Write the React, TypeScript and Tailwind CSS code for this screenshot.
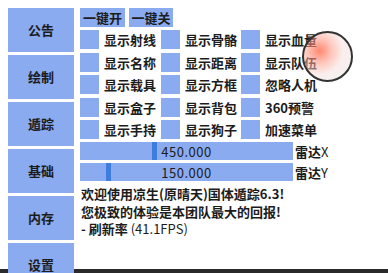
import React from 'react';

const tabs = ['公告', '绘制', '遁踪', '基础', '内存', '设置'];

const toggles = [
  ['显示射线', '显示骨骼', '显示血量'],
  ['显示名称', '显示距离', '显示队伍'],
  ['显示载具', '显示方框', '忽略人机'],
  ['显示盒子', '显示背包', '360预警'],
  ['显示手持', '显示狗子', '加速菜单'],
];

const sliders = [
  { value: '450.000', label: '雷达', axis: 'X', pos: 72 },
  { value: '150.000', label: '雷达', axis: 'Y', pos: 26 },
];

function Toggle({ label }: { label: string }) {
  return (
    <div className="flex items-center gap-[5px] h-[19px]">
      <div className="w-[19px] h-[19px] bg-[#8aabef] shrink-0" />
      <span className="text-[13px] font-bold text-[#1c1c1c] leading-none whitespace-nowrap">{label}</span>
    </div>
  );
}

export default function App() {
  return (
    <div
      className="relative w-[388px] h-[273px] bg-white overflow-hidden"
      style={{ fontFamily: '"Noto Sans CJK SC", "Noto Sans", sans-serif' }}
    >
      <div className="flex h-[269px]">
        {/* Tab column */}
        <div className="flex flex-col gap-[3px] pl-[8px] pt-[8px] w-[74px] shrink-0">
          {tabs.map(t => (
            <div
              key={t}
              className="h-[44px] w-[66px] shrink-0 bg-[#8aabef] flex items-center justify-center text-[13px] font-bold text-[#1c1c1c]"
            >
              {t}
            </div>
          ))}
        </div>

        {/* Content */}
        <div className="flex flex-col pl-[6px] pt-[8px]">
          <div className="flex gap-[4px]">
            <div className="h-[19px] w-[45px] bg-[#8aabef] flex items-center justify-center text-[13px] font-bold text-[#1c1c1c] leading-none">
              一键开
            </div>
            <div className="h-[19px] w-[44px] bg-[#8aabef] flex items-center justify-center text-[13px] font-bold text-[#1c1c1c] leading-none">
              一键关
            </div>
          </div>

          <div className="mt-[3px] grid grid-cols-[81px_80px_auto] gap-y-[3.5px]">
            {toggles.flat().map(l => (
              <Toggle key={l} label={l} />
            ))}
          </div>

          <div className="mt-[3px] flex flex-col gap-[3px]">
            {sliders.map(s => (
              <div key={s.axis} className="flex items-center gap-[2px]">
                <div className="relative w-[213px] h-[18px] bg-[#8aabef] flex items-center justify-center">
                  <div
                    className="absolute top-0 h-full w-[5px] bg-[#3d7ddf]"
                    style={{ left: `${s.pos}px` }}
                  />
                  <span className="relative text-[13px] text-[#1c1c1c] leading-none tracking-[0.5px]">{s.value}</span>
                </div>
                <span className="text-[13px] text-[#1c1c1c] leading-none">
                  <span className="font-bold">{s.label}</span>
                  {s.axis}
                </span>
              </div>
            ))}
          </div>

          <div className="mt-[4px] pl-[1px] text-[13px] font-bold text-[#1c1c1c] leading-[17.5px]">
            <div>欢迎使用凉生(原晴天)国体遁踪6.3!</div>
            <div>您极致的体验是本团队最大的回报!</div>
            <div>
              - 刷新率 <span className="font-normal">(41.1FPS)</span>
            </div>
          </div>
        </div>
      </div>

      {/* bottom strip */}
      <div className="h-[4px] bg-[#2a2a2a]" />

      {/* touch cursor overlay */}
      <div
        className="absolute left-[302px] top-[31px] w-[51px] h-[51px] rounded-full border-2 border-[#333]"
        style={{
          background:
            'radial-gradient(circle at 33% 38%, rgba(255,105,75,0.8) 0%, rgba(255,150,130,0.55) 28%, rgba(245,225,222,0.55) 55%, rgba(236,236,236,0.7) 100%)',
        }}
      />
    </div>
  );
}
